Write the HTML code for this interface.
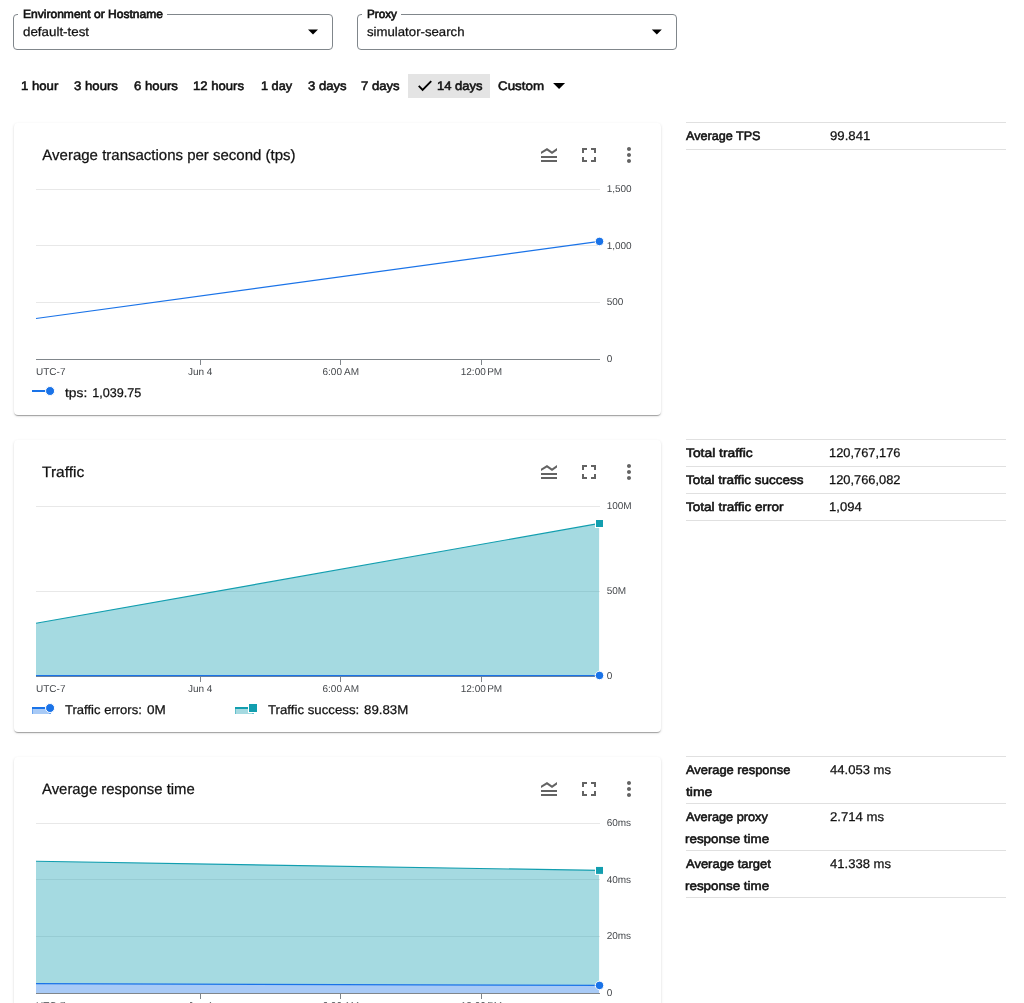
<!DOCTYPE html>
<html><head><meta charset="utf-8"><title>API metrics</title>
<style>
html,body{margin:0;padding:0;background:#fff}
body{width:1024px;height:1003px;position:relative;overflow:hidden;font-family:"Liberation Sans",sans-serif;color:#121212}
.t{position:absolute;white-space:nowrap;text-rendering:geometricPrecision;transform-origin:0 0;display:block}
.sel{position:absolute;top:14px;width:320px;height:36px;box-sizing:border-box;border:1px solid #80868b;border-radius:4px}
.notch{position:absolute;top:13px;height:3px;background:#fff}
.on{position:absolute;left:408px;top:74px;width:82px;height:24px;background:#e4e4e4}
.card{position:absolute;left:14px;width:647px;height:292px;background:#fff;border-radius:4px;box-shadow:0 2px 1px -1px rgba(0,0,0,.2),0 1px 1px 0 rgba(0,0,0,.14),0 1px 3px 0 rgba(0,0,0,.12)}
.r{position:absolute;left:686px;width:320px;height:1px;background:#e0e0e0}
svg{position:absolute;left:0;top:0}
#tx{position:absolute;left:0;top:0;width:1024px;height:1003px;will-change:transform}
</style></head><body>
<div class="sel" style="left:13px"></div><div class="notch" style="left:18.4px;width:148.6px"></div>
<div class="sel" style="left:357px"></div><div class="notch" style="left:362.4px;width:39.1px"></div>
<div class="on"></div>
<div class="card" style="top:123px"></div>
<div class="card" style="top:440px"></div>
<div class="card" style="top:757px"></div>
<div class="r" style="top:122px"></div><div class="r" style="top:149px"></div><div class="r" style="top:439px"></div><div class="r" style="top:466px"></div><div class="r" style="top:493px"></div><div class="r" style="top:520px"></div><div class="r" style="top:756px"></div><div class="r" style="top:803px"></div><div class="r" style="top:850px"></div><div class="r" style="top:897px"></div>
<svg width="1024" height="1003" viewBox="0 0 1024 1003">
<path d="M308.0 29.4h10l-5.0 5z" fill="#000"/>
<path d="M651.8 29.4h10l-5.0 5z" fill="#000"/>
<path d="M553.05 82.9h12l-6.0 6z" fill="#000"/>
<path d="M418.75 85.95L422.6 89.8L431.25 81.15" stroke="#000" stroke-width="1.9" fill="none"/>
<g fill="#636363"><path transform="translate(537 143)" d="M20 15H4v-2h16v2zm0 2H4v2h16v-2zm-5-6l5-3.55V5l-5 3.55L10 5 4 8.66V11l5.92-3.61L15 11z"/><path transform="translate(577 143)" d="M7 14H5v5h5v-2H7v-3zm-2-4h2V7h3V5H5v5zm12 7h-3v2h5v-5h-2v3zM14 5v2h3v3h2V5h-5z"/><path transform="translate(617 143)" d="M12 8c1.1 0 2-.9 2-2s-.9-2-2-2-2 .9-2 2 .9 2 2 2zm0 2c-1.1 0-2 .9-2 2s.9 2 2 2 2-.9 2-2-.9-2-2-2zm0 6c-1.1 0-2 .9-2 2s.9 2 2 2 2-.9 2-2-.9-2-2-2z"/></g>
<g fill="#636363"><path transform="translate(537 460)" d="M20 15H4v-2h16v2zm0 2H4v2h16v-2zm-5-6l5-3.55V5l-5 3.55L10 5 4 8.66V11l5.92-3.61L15 11z"/><path transform="translate(577 460)" d="M7 14H5v5h5v-2H7v-3zm-2-4h2V7h3V5H5v5zm12 7h-3v2h5v-5h-2v3zM14 5v2h3v3h2V5h-5z"/><path transform="translate(617 460)" d="M12 8c1.1 0 2-.9 2-2s-.9-2-2-2-2 .9-2 2 .9 2 2 2zm0 2c-1.1 0-2 .9-2 2s.9 2 2 2 2-.9 2-2-.9-2-2-2zm0 6c-1.1 0-2 .9-2 2s.9 2 2 2 2-.9 2-2-.9-2-2-2z"/></g>
<g fill="#636363"><path transform="translate(537 777)" d="M20 15H4v-2h16v2zm0 2H4v2h16v-2zm-5-6l5-3.55V5l-5 3.55L10 5 4 8.66V11l5.92-3.61L15 11z"/><path transform="translate(577 777)" d="M7 14H5v5h5v-2H7v-3zm-2-4h2V7h3V5H5v5zm12 7h-3v2h5v-5h-2v3zM14 5v2h3v3h2V5h-5z"/><path transform="translate(617 777)" d="M12 8c1.1 0 2-.9 2-2s-.9-2-2-2-2 .9-2 2 .9 2 2 2zm0 2c-1.1 0-2 .9-2 2s.9 2 2 2 2-.9 2-2-.9-2-2-2zm0 6c-1.1 0-2 .9-2 2s.9 2 2 2 2-.9 2-2-.9-2-2-2z"/></g>
<rect x="36" y="189" width="564" height="1" fill="#e8e8e8"/>
<rect x="36" y="245" width="564" height="1" fill="#e8e8e8"/>
<rect x="36" y="302" width="564" height="1" fill="#e8e8e8"/>
<rect x="36" y="359" width="564" height="1" fill="#80868b"/>
<rect x="200" y="359" width="1" height="6" fill="#80868b"/>
<rect x="340" y="359" width="1" height="6" fill="#80868b"/>
<rect x="481" y="359" width="1" height="6" fill="#80868b"/>
<path d="M36.0 318.5L599.5 241.4" stroke="#1a73e8" stroke-width="1.25" fill="none"/>
<circle cx="599.5" cy="241.4" r="4.25" fill="#1a73e8" stroke="#fff" stroke-width="1"/>
<rect x="32" y="390" width="14" height="2" fill="#1a73e8"/>
<circle cx="50.05" cy="391" r="4.5" fill="#1a73e8" stroke="#fff" stroke-width="1"/>
<rect x="36" y="506" width="564" height="1" fill="#e8e8e8"/>
<rect x="36" y="591" width="564" height="1" fill="#e8e8e8"/>
<rect x="36" y="676" width="564" height="1" fill="#80868b"/>
<rect x="200" y="676" width="1" height="6" fill="#80868b"/>
<rect x="340" y="676" width="1" height="6" fill="#80868b"/>
<rect x="481" y="676" width="1" height="6" fill="#80868b"/>
<path d="M36.0 623.3L599.1 523.5V676H36.0z" fill="#129eaf" fill-opacity=".38"/>
<path d="M36.0 623.3L599.5 523.4" stroke="#129eaf" stroke-width="1.15" fill="none"/>
<path d="M36.0 675.6H599.5" stroke="#1a73e8" stroke-width="1.25" fill="none"/>
<rect x="595.5" y="519.5" width="8" height="8" fill="#129eaf" stroke="#fff" stroke-width="1"/>
<circle cx="599.5" cy="675.45" r="4.25" fill="#1a73e8" stroke="#fff" stroke-width="1"/>
<rect x="32" y="707" width="19" height="7" fill="#1a73e8" fill-opacity=".38"/>
<rect x="32" y="709" width="1" height="5" fill="#1a73e8" fill-opacity=".45"/>
<rect x="49" y="713" width="2" height="1" fill="#1a73e8" fill-opacity=".45"/>
<rect x="32" y="707" width="13" height="2" fill="#1a73e8"/>
<circle cx="50.05" cy="708" r="4.5" fill="#1a73e8" stroke="#fff" stroke-width="1"/>
<rect x="235" y="707" width="19" height="7" fill="#129eaf" fill-opacity=".38"/>
<rect x="235" y="709" width="1" height="5" fill="#129eaf" fill-opacity=".45"/>
<rect x="252" y="713" width="2" height="1" fill="#129eaf" fill-opacity=".45"/>
<rect x="235" y="707" width="13" height="2" fill="#129eaf"/>
<rect x="248.5" y="703.5" width="9" height="9" fill="#129eaf" stroke="#fff" stroke-width="1"/>
<rect x="36" y="823" width="564" height="1" fill="#e8e8e8"/>
<rect x="36" y="879" width="564" height="1" fill="#e8e8e8"/>
<rect x="36" y="936" width="564" height="1" fill="#e8e8e8"/>
<rect x="36" y="993" width="564" height="1" fill="#80868b"/>
<rect x="200" y="993" width="1" height="6" fill="#80868b"/>
<rect x="340" y="993" width="1" height="6" fill="#80868b"/>
<rect x="481" y="993" width="1" height="6" fill="#80868b"/>
<path d="M36.0 983.6L599.1 985.4V993H36.0z" fill="#1a73e8" fill-opacity=".38"/>
<path d="M36.0 861.3L599.1 870.4V985.4L36.0 983.6z" fill="#129eaf" fill-opacity=".38"/>
<path d="M36.0 861.3L599.5 870.4" stroke="#129eaf" stroke-width="1.15" fill="none"/>
<path d="M36.0 983.6L599.5 985.4" stroke="#1a73e8" stroke-width="1.25" fill="none"/>
<rect x="595.5" y="866.4" width="8" height="8" fill="#129eaf" stroke="#fff" stroke-width="1"/>
<circle cx="599.5" cy="985.4" r="4.25" fill="#1a73e8" stroke="#fff" stroke-width="1"/>
</svg>
<div id="tx">
<span class="t" style="left:22.71px;top:7px;font-size:11.8px;line-height:15px;transform:scaleX(1.0217);-webkit-text-stroke:0.65px #121212;">Environment or Hostname</span>
<span class="t" style="left:22.64px;top:25px;font-size:12.6px;line-height:15px;transform:scaleX(1.0601);-webkit-text-stroke:0.25px #121212;">default-test</span>
<span class="t" style="left:367.04px;top:7px;font-size:11.8px;line-height:15px;transform:scaleX(0.9943);-webkit-text-stroke:0.65px #121212;">Proxy</span>
<span class="t" style="left:366.93px;top:25px;font-size:12.6px;line-height:15px;transform:scaleX(1.0476);-webkit-text-stroke:0.25px #121212;">simulator-search</span>
<span class="t" style="left:20.70px;top:79px;font-size:12.4px;line-height:15px;transform:scaleX(1.0621);-webkit-text-stroke:0.55px #121212;">1 hour</span>
<span class="t" style="left:73.70px;top:79px;font-size:12.4px;line-height:15px;transform:scaleX(1.0637);-webkit-text-stroke:0.55px #121212;">3 hours</span>
<span class="t" style="left:133.53px;top:79px;font-size:12.4px;line-height:15px;transform:scaleX(1.0629);-webkit-text-stroke:0.55px #121212;">6 hours</span>
<span class="t" style="left:193.30px;top:79px;font-size:12.4px;line-height:15px;transform:scaleX(1.0567);-webkit-text-stroke:0.55px #121212;">12 hours</span>
<span class="t" style="left:260.63px;top:79px;font-size:12.4px;line-height:15px;transform:scaleX(1.0258);-webkit-text-stroke:0.55px #121212;">1 day</span>
<span class="t" style="left:307.60px;top:79px;font-size:12.4px;line-height:15px;transform:scaleX(1.0563);-webkit-text-stroke:0.55px #121212;">3 days</span>
<span class="t" style="left:361.13px;top:79px;font-size:12.4px;line-height:15px;transform:scaleX(1.0584);-webkit-text-stroke:0.55px #121212;">7 days</span>
<span class="t" style="left:436.81px;top:79px;font-size:12.4px;line-height:15px;transform:scaleX(1.0497);-webkit-text-stroke:0.55px #121212;">14 days</span>
<span class="t" style="left:498.12px;top:79px;font-size:12.4px;line-height:15px;transform:scaleX(1.0786);-webkit-text-stroke:0.55px #121212;">Custom</span>
<span class="t" style="left:42.37px;top:147px;font-size:15.0px;line-height:18px;-webkit-text-stroke:0.25px #121212;">Average transactions per second (tps)</span>
<span class="t" style="left:42.05px;top:464px;font-size:15.0px;line-height:18px;transform:scaleX(1.0346);-webkit-text-stroke:0.25px #121212;">Traffic</span>
<span class="t" style="left:42.37px;top:781px;font-size:15.0px;line-height:18px;transform:scaleX(0.9922);-webkit-text-stroke:0.25px #121212;">Average response time</span>
<span class="t" style="left:606.65px;top:184px;font-size:10px;line-height:12px;color:#45484c;">1,500</span>
<span class="t" style="left:606.65px;top:241px;font-size:10px;line-height:12px;color:#45484c;">1,000</span>
<span class="t" style="left:606.65px;top:297px;font-size:10px;line-height:12px;color:#45484c;">500</span>
<span class="t" style="left:606.65px;top:354px;font-size:10px;line-height:12px;color:#45484c;">0</span>
<span class="t" style="left:606.65px;top:501px;font-size:10px;line-height:12px;color:#45484c;">100M</span>
<span class="t" style="left:606.65px;top:586px;font-size:10px;line-height:12px;color:#45484c;">50M</span>
<span class="t" style="left:606.65px;top:671px;font-size:10px;line-height:12px;color:#45484c;">0</span>
<span class="t" style="left:606.65px;top:818px;font-size:10px;line-height:12px;color:#45484c;">60ms</span>
<span class="t" style="left:606.65px;top:875px;font-size:10px;line-height:12px;color:#45484c;">40ms</span>
<span class="t" style="left:606.65px;top:931px;font-size:10px;line-height:12px;color:#45484c;">20ms</span>
<span class="t" style="left:606.65px;top:988px;font-size:10px;line-height:12px;color:#45484c;">0</span>
<span class="t" style="left:36.00px;top:367px;font-size:10px;line-height:12px;color:#45484c;">UTC-7</span>
<span class="t" style="left:187.90px;top:367px;font-size:10px;line-height:12px;color:#45484c;">Jun 4</span>
<span class="t" style="left:322.50px;top:367px;font-size:10px;line-height:12px;color:#45484c;">6:00</span>
<span class="t" style="left:344.00px;top:367px;font-size:10px;line-height:12px;color:#45484c;">AM</span>
<span class="t" style="left:460.75px;top:367px;font-size:10px;line-height:12px;color:#45484c;">12:00</span>
<span class="t" style="left:487.20px;top:367px;font-size:10px;line-height:12px;color:#45484c;">PM</span>
<span class="t" style="left:36.00px;top:684px;font-size:10px;line-height:12px;color:#45484c;">UTC-7</span>
<span class="t" style="left:187.90px;top:684px;font-size:10px;line-height:12px;color:#45484c;">Jun 4</span>
<span class="t" style="left:322.50px;top:684px;font-size:10px;line-height:12px;color:#45484c;">6:00</span>
<span class="t" style="left:344.00px;top:684px;font-size:10px;line-height:12px;color:#45484c;">AM</span>
<span class="t" style="left:460.75px;top:684px;font-size:10px;line-height:12px;color:#45484c;">12:00</span>
<span class="t" style="left:487.20px;top:684px;font-size:10px;line-height:12px;color:#45484c;">PM</span>
<span class="t" style="left:36.00px;top:1001px;font-size:10px;line-height:12px;color:#45484c;">UTC-7</span>
<span class="t" style="left:187.90px;top:1001px;font-size:10px;line-height:12px;color:#45484c;">Jun 4</span>
<span class="t" style="left:322.50px;top:1001px;font-size:10px;line-height:12px;color:#45484c;">6:00</span>
<span class="t" style="left:344.00px;top:1001px;font-size:10px;line-height:12px;color:#45484c;">AM</span>
<span class="t" style="left:460.75px;top:1001px;font-size:10px;line-height:12px;color:#45484c;">12:00</span>
<span class="t" style="left:487.20px;top:1001px;font-size:10px;line-height:12px;color:#45484c;">PM</span>
<span class="t" style="left:65.24px;top:386px;font-size:12.6px;line-height:15px;transform:scaleX(1.0938);-webkit-text-stroke:0.25px #121212;">tps:</span>
<span class="t" style="left:92.24px;top:386px;font-size:12.6px;line-height:15px;-webkit-text-stroke:0.25px #121212;">1,039.75</span>
<span class="t" style="left:65.11px;top:703px;font-size:12.6px;line-height:15px;transform:scaleX(1.0364);-webkit-text-stroke:0.25px #121212;">Traffic errors:</span>
<span class="t" style="left:147.02px;top:703px;font-size:12.6px;line-height:15px;transform:scaleX(1.0736);-webkit-text-stroke:0.25px #121212;">0M</span>
<span class="t" style="left:267.85px;top:703px;font-size:12.6px;line-height:15px;transform:scaleX(1.0516);-webkit-text-stroke:0.25px #121212;">Traffic success:</span>
<span class="t" style="left:363.52px;top:703px;font-size:12.6px;line-height:15px;transform:scaleX(1.0536);-webkit-text-stroke:0.25px #121212;">89.83M</span>
<span class="t" style="left:686.28px;top:129px;font-size:12.4px;line-height:15px;transform:scaleX(1.0171);-webkit-text-stroke:0.55px #121212;">Average TPS</span>
<span class="t" style="left:829.68px;top:129px;font-size:12.6px;line-height:15px;transform:scaleX(1.0475);-webkit-text-stroke:0.25px #121212;">99.841</span>
<span class="t" style="left:685.99px;top:446px;font-size:12.4px;line-height:15px;transform:scaleX(1.1171);-webkit-text-stroke:0.55px #121212;">Total traffic</span>
<span class="t" style="left:829.32px;top:446px;font-size:12.6px;line-height:15px;transform:scaleX(1.0199);-webkit-text-stroke:0.25px #121212;">120,767,176</span>
<span class="t" style="left:686.00px;top:473px;font-size:12.4px;line-height:15px;transform:scaleX(1.0890);-webkit-text-stroke:0.55px #121212;">Total traffic success</span>
<span class="t" style="left:829.32px;top:473px;font-size:12.6px;line-height:15px;transform:scaleX(1.0211);-webkit-text-stroke:0.25px #121212;">120,766,082</span>
<span class="t" style="left:686.00px;top:500px;font-size:12.4px;line-height:15px;transform:scaleX(1.0933);-webkit-text-stroke:0.55px #121212;">Total traffic error</span>
<span class="t" style="left:829.30px;top:500px;font-size:12.6px;line-height:15px;transform:scaleX(1.0369);-webkit-text-stroke:0.25px #121212;">1,094</span>
<span class="t" style="left:686.27px;top:763px;font-size:12.4px;line-height:15px;transform:scaleX(1.0394);-webkit-text-stroke:0.55px #121212;">Average response</span>
<span class="t" style="left:830.00px;top:763px;font-size:12.6px;line-height:15px;transform:scaleX(1.0367);-webkit-text-stroke:0.25px #121212;">44.053 ms</span>
<span class="t" style="left:686.09px;top:785px;font-size:12.4px;line-height:15px;transform:scaleX(1.1242);-webkit-text-stroke:0.55px #121212;">time</span>
<span class="t" style="left:686.28px;top:810px;font-size:12.4px;line-height:15px;transform:scaleX(1.0261);-webkit-text-stroke:0.55px #121212;">Average proxy</span>
<span class="t" style="left:829.64px;top:810px;font-size:12.6px;line-height:15px;transform:scaleX(1.0449);-webkit-text-stroke:0.25px #121212;">2.714 ms</span>
<span class="t" style="left:685.41px;top:832px;font-size:12.4px;line-height:15px;transform:scaleX(1.0817);-webkit-text-stroke:0.55px #121212;">response time</span>
<span class="t" style="left:686.27px;top:857px;font-size:12.4px;line-height:15px;transform:scaleX(1.0464);-webkit-text-stroke:0.55px #121212;">Average target</span>
<span class="t" style="left:830.00px;top:857px;font-size:12.6px;line-height:15px;transform:scaleX(1.0367);-webkit-text-stroke:0.25px #121212;">41.338 ms</span>
<span class="t" style="left:685.41px;top:879px;font-size:12.4px;line-height:15px;transform:scaleX(1.0817);-webkit-text-stroke:0.55px #121212;">response time</span>
</div>
</body></html>
